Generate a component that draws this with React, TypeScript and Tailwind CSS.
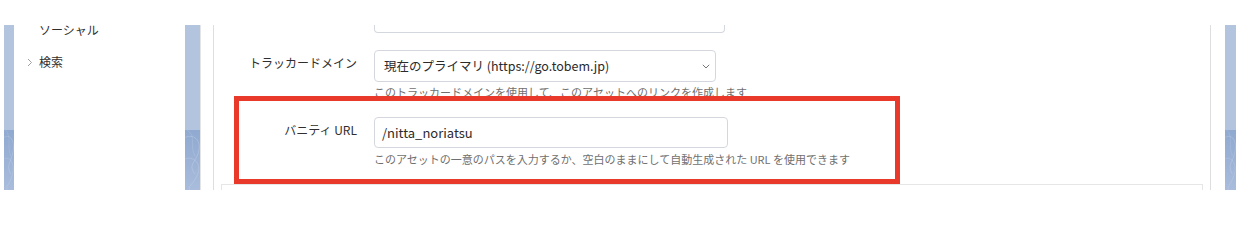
import React from "react";

function BlueStrip({ w }: { w: string }) {
  return (
    <div className={`${w} flex flex-col shrink-0`}>
      <div className="h-[105px] bg-[#b3c4df]" />
      <div className="flex-1 bg-gradient-to-b from-[#8fa9d0] to-[#a9bcdc] relative overflow-hidden">
        <svg className="absolute inset-0 w-full h-full" viewBox="0 0 15 60" preserveAspectRatio="none">
          <path d="M-4 10 C 6 2, 16 8, 14 20 S 2 34, 10 44" fill="none" stroke="#ffffff" strokeOpacity="0.18" strokeWidth="1" />
          <path d="M-2 30 C 8 24, 18 34, 12 46 S 0 56, 8 64" fill="none" stroke="#ffffff" strokeOpacity="0.15" strokeWidth="1" />
          <path d="M2 0 C 12 6, 4 16, 10 26" fill="none" stroke="#ffffff" strokeOpacity="0.12" strokeWidth="1" />
        </svg>
      </div>
    </div>
  );
}

export default function App() {
  return (
    <div className="w-[1250px] h-[206px] bg-white overflow-hidden [font-family:'Noto_Sans_CJK_JP','Noto_Sans',sans-serif] text-[#2f2f2f]">
      <div className="flex h-[165px] mt-[25px] ml-[4px] mr-[14px]">
        <BlueStrip w="w-[10px]" />
        {/* sidebar */}
        <div className="w-[171px] shrink-0 bg-white flex flex-col">
          <div className="pl-[25px] -mt-[3px] text-[12px] leading-[16px]">ソーシャル</div>
          <div className="flex items-center mt-[16px] pl-[13px] text-[12px] leading-[16px]">
            <svg width="6" height="9" viewBox="0 0 6 9" className="mr-[6px]">
              <path d="M1 1 L4.5 4.5 L1 8" fill="none" stroke="#a0a0a0" strokeWidth="1" />
            </svg>
            <span>検索</span>
          </div>
        </div>
        <BlueStrip w="w-[15px]" />
        {/* main panel */}
        <div className="flex-1 bg-white border-l border-[#e4e4e4] pl-[12px] pr-[14px]">
          <div className="relative h-full border-x border-[#dedede] flex flex-col overflow-hidden">
            {/* bottom of previous input */}
            <div className="grid grid-cols-[143px_1fr] gap-x-[17px]">
              <div />
              <div className="w-[351px] h-[8px] border-x border-b border-[#d4d8de] rounded-b-[4px]" />
            </div>
            {/* tracker domain */}
            <div className="grid grid-cols-[143px_1fr] gap-x-[17px] mt-[17px]">
              <div className="text-right text-[12px] leading-[16px] pt-[5px]">トラッカードメイン</div>
              <div className="flex flex-col">
                <div className="w-[342px] h-[32px] border border-[#d4d8de] rounded-[4px] flex items-center justify-between pl-[9px] pr-[5px] text-[12.5px] text-[#2b2b2b]">
                  <span>現在のプライマリ (https://go.tobem.jp)</span>
                  <svg width="8" height="5" viewBox="0 0 8 5">
                    <path d="M0.8 0.8 L4 4 L7.2 0.8" fill="none" stroke="#777777" strokeWidth="1" />
                  </svg>
                </div>
                <div className="mt-[2px] text-[11px] leading-[16px] text-[#6f6f6f]">
                  このトラッカードメインを使用して、このアセットへのリンクを作成します
                </div>
              </div>
            </div>
            {/* vanity url */}
            <div className="grid grid-cols-[143px_1fr] gap-x-[17px] mt-[17px]">
              <div className="text-right text-[12px] leading-[16px] pt-[5px]">バニティ URL</div>
              <div className="flex flex-col">
                <div className="w-[354px] h-[31px] border border-[#d4d8de] rounded-[4px] flex items-center pl-[7px] text-[13px] text-[#2b2b2b]">
                  /nitta_noriatsu
                </div>
                <div className="mt-[3px] text-[11px] leading-[16px] text-[#6f6f6f]">
                  このアセットの一意のパスを入力するか、空白のままにして自動生成された URL を使用できます
                </div>
              </div>
            </div>
            {/* next card top */}
            <div className="mt-[17px] mx-[7px] h-[20px] border-t border-x border-[#e6e6e6] shrink-0" />
            {/* red highlight annotation */}
            <div className="absolute left-[20px] top-[71px] w-[666px] h-[88px] border-[5px] border-[#e8392b] pointer-events-none" />
          </div>
        </div>
        <BlueStrip w="w-[11px]" />
      </div>
    </div>
  );
}
